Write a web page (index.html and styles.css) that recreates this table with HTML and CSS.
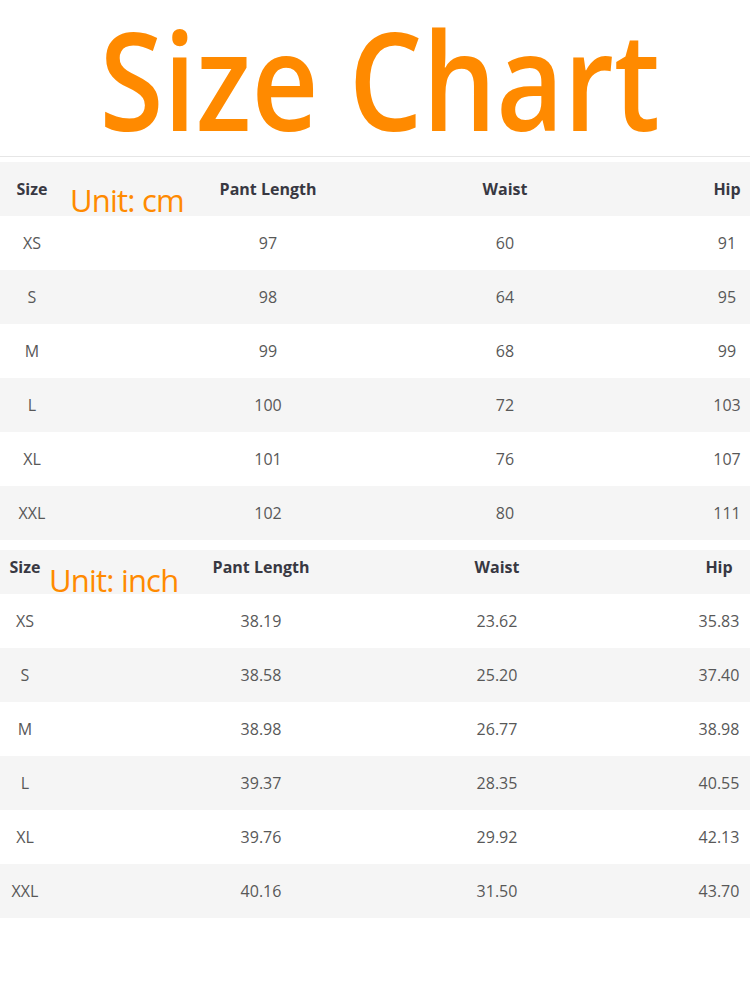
FILE: index.html
```html
<!DOCTYPE html>
<html>
<head>
<meta charset="utf-8">
<link rel="stylesheet" href="styles.css">
</head>
<body>
<div class="page">
  <header class="title-wrap">
    <h1 class="title">Size Chart</h1>
  </header>

  <section class="chart chart-cm">
    <div class="row head">
      <div class="c1">Size</div><div class="c2">Pant Length</div><div class="c3">Waist</div><div class="c4">Hip</div>
    </div>
    <div class="row"><div class="c1">XS</div><div class="c2">97</div><div class="c3">60</div><div class="c4">91</div></div>
    <div class="row alt"><div class="c1">S</div><div class="c2">98</div><div class="c3">64</div><div class="c4">95</div></div>
    <div class="row"><div class="c1">M</div><div class="c2">99</div><div class="c3">68</div><div class="c4">99</div></div>
    <div class="row alt"><div class="c1">L</div><div class="c2">100</div><div class="c3">72</div><div class="c4">103</div></div>
    <div class="row"><div class="c1">XL</div><div class="c2">101</div><div class="c3">76</div><div class="c4">107</div></div>
    <div class="row alt"><div class="c1">XXL</div><div class="c2">102</div><div class="c3">80</div><div class="c4">111</div></div>
    <span class="unit unit-cm">Unit: cm</span>
  </section>

  <section class="chart chart-inch">
    <div class="row head">
      <div class="c1">Size</div><div class="c2">Pant Length</div><div class="c3">Waist</div><div class="c4">Hip</div>
    </div>
    <div class="row"><div class="c1">XS</div><div class="c2">38.19</div><div class="c3">23.62</div><div class="c4">35.83</div></div>
    <div class="row alt"><div class="c1">S</div><div class="c2">38.58</div><div class="c3">25.20</div><div class="c4">37.40</div></div>
    <div class="row"><div class="c1">M</div><div class="c2">38.98</div><div class="c3">26.77</div><div class="c4">38.98</div></div>
    <div class="row alt"><div class="c1">L</div><div class="c2">39.37</div><div class="c3">28.35</div><div class="c4">40.55</div></div>
    <div class="row"><div class="c1">XL</div><div class="c2">39.76</div><div class="c3">29.92</div><div class="c4">42.13</div></div>
    <div class="row alt"><div class="c1">XXL</div><div class="c2">40.16</div><div class="c3">31.50</div><div class="c4">43.70</div></div>
    <span class="unit unit-inch">Unit: inch</span>
  </section>
</div>
</body>
</html>
```

FILE: styles.css
```css
* { box-sizing: border-box; }
html, body { margin: 0; padding: 0; background: #fff; }
body { font-family: "Open Sans", "Liberation Sans", sans-serif; width: 750px; }

.page { width: 750px; }

.title-wrap {
  height: 157px;
  padding-top: 4px;
  padding-left: 10px;
  border-bottom: 1px solid #e6e6e6;
  text-align: center;
}
.title {
  margin: 0;
  display: inline-block;
  font-size: 136px;
  line-height: 150px;
  font-weight: 600;
  color: #ff8a00;
  transform: scaleX(0.855);
  transform-origin: center;
  white-space: nowrap;
}

.chart { position: relative; }
.chart-cm { margin-top: 5px; }
.chart-inch { margin-top: 10px; }

.row {
  display: grid;
  height: 54px;
  align-items: center;
  font-size: 16px;
  color: #585858;
  text-align: center;
  background: #fff;
}
.row.alt { background: #f5f5f5; }
.row.head {
  background: #f5f5f5;
  font-weight: 700;
  color: #383842;
}

.chart-cm .row { grid-template-columns: 64px 408px 66px 212px; }
.chart-cm .c4 { padding-left: 166px; }

.chart-inch .row { grid-template-columns: 50px 422px 50px 228px; }
.chart-inch .c4 { padding-left: 170px; padding-right: 4px; }
.chart-inch .row.head { height: 44px; align-items: start; padding-top: 6px; }

.c1, .c2, .c3, .c4 { white-space: nowrap; }

.unit {
  position: absolute;
  font-size: 31px;
  line-height: 31px;
  color: #ff8a00;
  letter-spacing: -0.8px;
  white-space: nowrap;
}
.unit-cm { left: 70px; top: 23px; }
.unit-inch { left: 49px; top: 15px; }
```
